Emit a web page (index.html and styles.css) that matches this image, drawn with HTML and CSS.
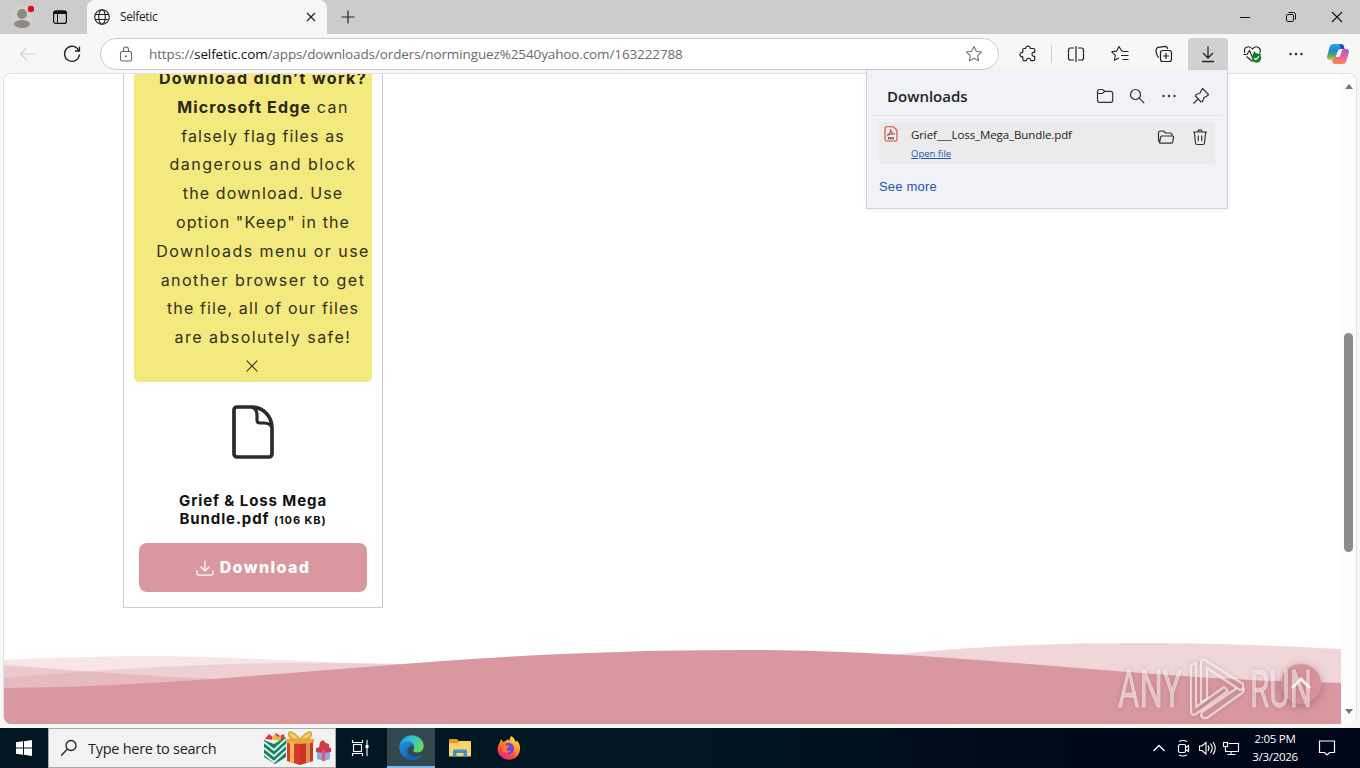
FILE: index.html
```html
<!DOCTYPE html>
<html lang="en">
<head>
    <meta charset="UTF-8">
    <meta name="viewport" content="width=device-width, initial-scale=1.0">
    <title>Selfetic</title>
    <link rel="stylesheet" href="styles.css">
</head>
<body>
    <div class="screen">
        <!-- tab strip -->
        <div class="tabbar">
            <div class="profile">
                <svg width="24" height="26" viewBox="0 0 24 26"><circle cx="12" cy="14" r="11" fill="#d3d0ce"/><circle cx="12" cy="11" r="5" fill="#8d8985"/><ellipse cx="12" cy="21" rx="8" ry="4" fill="#8d8985"/><circle cx="21" cy="6" r="3.2" fill="#d9101f"/></svg>
            </div>
            <svg class="workspace" width="16" height="16" viewBox="0 0 16 16"><rect x="1.6" y="2" width="12.8" height="12.4" rx="2" fill="none" stroke="#111" stroke-width="1.2"/><path d="M1.5 5V3.5a2 2 0 0 1 2-2h9a2 2 0 0 1 2 2V5z" fill="#111"/><path d="M5.5 5v9" stroke="#111"/></svg>
            <div class="tab">
                <svg width="16" height="16" viewBox="0 0 16 16" fill="none" stroke="#222" stroke-width="1.1"><circle cx="8" cy="8" r="7.3"/><ellipse cx="8" cy="8" rx="3.3" ry="7.3"/><path d="M1.2 5.5h13.6M1.2 10.5h13.6"/></svg>
                <span class="tab-title">Selfetic</span>
                <svg width="10" height="10" viewBox="0 0 10 10" stroke="#222" stroke-width="1.2"><path d="M1 1l8 8M9 1l-8 8"/></svg>
            </div>
            <svg class="newtab" width="14" height="14" viewBox="0 0 14 14" stroke="#222" stroke-width="1.2"><path d="M7 .5v13M.5 7h13"/></svg>
            <div class="window-buttons">
                <svg width="46" height="34" viewBox="0 0 46 34"><path d="M18 17.5h10" stroke="#111"/></svg>
                <svg width="46" height="34" viewBox="0 0 46 34" fill="none" stroke="#111"><rect x="18.5" y="14.5" width="7" height="7" rx="1.3"/><path d="M20.5 12.5h5a2 2 0 0 1 2 2v5"/></svg>
                <svg width="46" height="34" viewBox="0 0 46 34" fill="none" stroke="#111" stroke-width="1.1"><path d="M18 12l10 10M28 12l-10 10"/></svg>
            </div>
        </div>

        <!-- toolbar -->
        <div class="toolbar">
            <svg class="tool" viewBox="0 0 44 32" fill="none" stroke="#cfcfcf" stroke-width="1.1"><path d="M14.5 16h15M21 9.500l-6.500 6.500 6.500 6.500"/></svg>
            <svg class="tool" viewBox="0 0 44 32" fill="none" stroke="#222" stroke-width="1.3"><path d="M29 13a7.500 7.500 0 1 0 .5 3.500M29.500 8.500V13H25"/></svg>
            <div class="address">
                <svg width="14" height="16" viewBox="0 0 14 16" fill="none" stroke="#666" stroke-width="1.1"><rect x="1.500" y="5.500" width="11" height="9.500" rx="1.800"/><path d="M4.500 5.500V3.500a2.500 2.500 0 0 1 5 0v2"/><circle cx="7" cy="10.300" r=".5" fill="#666"/></svg>
                <span class="url">https://<b>selfetic.com</b>/apps/downloads/orders/norminguez%2540yahoo.com/163222788</span>
                <svg width="18" height="18" viewBox="0 0 18 18" fill="none" stroke="#777" stroke-width="1.100" stroke-linejoin="round"><path d="M9 1.500l2.300 4.800 5.200.7-3.800 3.600.9 5.200L9 13.300l-4.600 2.500.9-5.200L1.500 7l5.200-.7z"/></svg>
            </div>
            <!-- extensions -->
            <svg class="tool ext" viewBox="0 0 44 32" fill="none" stroke="#222" stroke-width="1.2" stroke-linejoin="round"><path d="M19 10.500h1.700c-.1-3.300 4.700-3.300 4.600 0H28.500q1.200 0 1.200 1.200v2.500c-3.600-.4-3.600 4.600 0 4.200v3q0 1.200-1.200 1.200h-2.700c.2-3-4.700-3-4.500 0H19q-1.200 0-1.200-1.200v-2.600c-3.800.3-3.800-4.800 0-4.500v-2.600q0-1.200 1.200-1.200z"/></svg>
            <span class="divider"></span>
            <svg class="tool split" viewBox="0 0 44 32" fill="none" stroke="#222" stroke-width="1.2"><path d="M20 10h-3.500a2 2 0 0 0-2 2v8a2 2 0 0 0 2 2H20M24 10h3.500a2 2 0 0 1 2 2v8a2 2 0 0 1-2 2H24M22 8v16"/></svg>
            <svg class="tool" viewBox="0 0 44 32" fill="none" stroke="#222" stroke-width="1.1" stroke-linejoin="round"><path d="M25 13l-1.500-.2L21 8.500l-2.300 4.600-5 .7 3.600 3.500-.9 5 4.500-2.300M24.500 13.500h6M23 17.500h7.500M24.500 21.500h6"/></svg>
            <svg class="tool" viewBox="0 0 44 32" fill="none" stroke="#222" stroke-width="1.2"><path d="M17 19.500c-2-.3-3.300-6-2.800-8.200.3-1.300 1-1.800 2-2l7-1c1.500 0 2.100.9 2.500 2.500"/><rect x="18.500" y="12.500" width="11" height="11" rx="2.300"/><path d="M24 15v6M21 18h6"/></svg>
            <svg class="tool active" viewBox="0 0 40 32" fill="none" stroke="#222" stroke-width="1.3"><path d="M20 8.500v11M15 15l5 5 5-5M14 23.500h12"/></svg>
            <svg class="tool heart" viewBox="0 0 44 32" fill="none" stroke="#222" stroke-width="1.1"><path d="M15 15c-2.500-5.500 4-8.500 7.500-4 3.500-4.500 10-1 7 4.500M16.500 18.500l6 5M13.500 16.500H17l2.500-4 3 7 2-5 1.200 2h5"/><circle cx="26.500" cy="20" r="4.700" fill="#13801a" stroke="none"/><path d="M24.200 20l1.700 1.700 3-3.300" stroke="#fff"/></svg>
            <svg class="tool" viewBox="0 0 44 32" fill="#222"><circle cx="16.500" cy="16" r="1.200"/><circle cx="22" cy="16" r="1.200"/><circle cx="27.500" cy="16" r="1.200"/></svg>
            <svg class="copilot" width="24" height="24" viewBox="0 0 24 24">
                <defs>
                    <linearGradient id="cp1" x1="0" y1="0" x2="0" y2="1"><stop offset="0" stop-color="#20a7e8"/><stop offset=".4" stop-color="#2b82d8"/><stop offset=".7" stop-color="#48ad72"/><stop offset="1" stop-color="#e8c42e"/></linearGradient>
                    <linearGradient id="cp2" x1="0" y1="0" x2="0" y2="1"><stop offset="0" stop-color="#a45ae4"/><stop offset=".5" stop-color="#e8609e"/><stop offset="1" stop-color="#fa8550"/></linearGradient>
                </defs>
                <path d="M8 2h7c2 0 2.500 1 3 3l.5 2h-4c-1.500 0-2.500 1-3 3l-1.500 5c-.5 2-1.500 3-3.500 3H4c-2.500 0-3.500-1.500-2.800-4L3.500 5.500C4.200 3 5.500 2 8 2z" fill="url(#cp1)"/>
                <path d="M16 22H9c-1.500 0-2.300-1-2.700-2.500L6 18c2 0 3-1 3.500-3h2c1.500 0 2.200-1 2.700-2.500l1.300-3C16 8 16.800 7 18.300 7H20c2.500 0 3.500 1.500 2.800 4l-2.300 7.500C19.800 21 18.500 22 16 22z" fill="url(#cp2)"/>
                <path d="M14 2h1c2 0 2.500 1 3 3l.5 2h-4z" fill="#1a51b8"/>
                <path d="M11.500 10L10 15h2.500c1.200 0 1.700-1 2.100-2.300l1-2.700z" fill="#f7f7f7"/>
            </svg>
        </div>

        <!-- page -->
        <div class="viewport">
            <div class="page">
                <div class="card">
                    <div class="notice">
                        <p class="notice-text"><b class="loose">Download didn’t work?</b><br><b>Microsoft Edge</b> <span class="loose">can</span><br>falsely flag files as<br><span class="loose">dangerous and block</span><br>the download. Use<br>option "Keep" in the<br><span class="loose">Downloads menu or use</span><br><span class="loose">another browser to get</span><br>the file, all of our files<br><span class="loose">are absolutely safe!</span></p>
                        <svg class="notice-close" width="12" height="12" viewBox="0 0 12 12" stroke="#332f18" stroke-width="1.1"><path d="M.7.7l10.600 10.600M11.300.7L.7 11.300"/></svg>
                    </div>
                    <svg class="file-icon" width="42" height="54" viewBox="0 0 42 54" fill="none" stroke="#2b2b2b" stroke-width="3.700" stroke-linejoin="round"><path d="M5 2h14c12 0 21 9 21 21v26a3 3 0 0 1-3 3H5a3 3 0 0 1-3-3V5a3 3 0 0 1 3-3z"/><path d="M19 2c4 1 6 4 6 8v5c0 2 1 3 3 3h4c4 0 7 1 8 5" stroke-width="3.200"/></svg>
                    <div class="file-name">Grief &amp; Loss Mega<br>Bundle.pdf <small>(106 KB)</small></div>
                    <div class="download-btn">
                        <svg width="18" height="16" viewBox="0 0 18 16" fill="none" stroke="#fff" stroke-width="1.200" stroke-linecap="round" stroke-linejoin="round"><path d="M9 .8v10M5 7l4 4 4-4M1 10.500v3c0 1 .6 1.700 1.700 1.700h12.600c1.100 0 1.700-.7 1.700-1.700v-3"/></svg>
                        <span>Download</span>
                    </div>
                </div>
                <svg class="waves" width="1337" height="84" viewBox="4 641 1337 84">
                    <path d="M4 660C60 657 110 656 160 656C250 657 320 663 400 664V725H4z" fill="#f7e6e8"/>
                    <path d="M4 665C60 669 110 674 217 679V725H4z" fill="#d9969e" fill-opacity=".36"/>
                    <path d="M4 678C60 673 100 670 180 666C250 662 330 663 400 664V725H4z" fill="#d9969e" fill-opacity=".28"/>
                    <path d="M880 656C970 646 1060 643 1140 643C1220 643 1280 646 1341 649V725H880z" fill="#f0d5d9"/>
                    <path d="M4 688C250 686 430 650 740 650C960 650 1120 679 1341 683V725H4z" fill="#d9979f"/>
                </svg>
                <svg class="to-top" width="44" height="44" viewBox="0 0 44 44"><circle cx="22" cy="22" r="20" fill="#d9929b"/><path d="M13 26l9-9 9 9" fill="none" stroke="#fff" stroke-width="3"/></svg>
                <svg class="watermark" width="204" height="68" viewBox="1115 655 204 68">
                    <g fill="#fff" fill-opacity=".5" stroke="#fff" stroke-opacity=".4" stroke-width=".8" font-family="Roboto, sans-serif" font-weight="400" font-size="52">
                        <text x="1118" y="707" textLength="64" lengthAdjust="spacingAndGlyphs">ANY</text>
                        <text x="1250" y="707" textLength="62" lengthAdjust="spacingAndGlyphs">RUN</text>
                    </g>
                    <g fill="none" stroke="#fff" stroke-opacity=".6" stroke-width="2.200" stroke-linejoin="round">
                        <path d="M1196 663l-4 2q-1 1-1 3v42q0 7 5 4l32-23-4-4-28 20v-44z"/>
                        <path d="M1201 702v-39q0-5 4-3l38 24v5l-3 1-33-22v31z"/>
                        <path d="M1243 688q2 3-1 5l-35 25q-5 1-6-3l1-3 35-24"/>
                    </g>
                </svg>
            </div>
            <div class="scrollbar">
                <span class="arrow up"></span>
                <span class="thumb"></span>
                <span class="arrow down"></span>
            </div>
        </div>

        <!-- downloads flyout -->
        <div class="flyout">
            <div class="flyout-head">
                <h2>Downloads</h2>
                <svg width="18" height="18" viewBox="0 0 18 18" fill="none" stroke="#333" stroke-width="1.200"><path d="M1.500 4.500a2 2 0 0 1 2-2h3.200l2 1.800h6a2 2 0 0 1 2 2v7a2 2 0 0 1-2 2H3.500a2 2 0 0 1-2-2zM1.500 6.500h5l2.200-2.200"/></svg>
                <svg width="18" height="18" viewBox="0 0 18 18" fill="none" stroke="#333" stroke-width="1.200"><circle cx="7.500" cy="7.500" r="5"/><path d="M11.200 11.200l5 5"/></svg>
                <svg width="18" height="18" viewBox="0 0 18 18" fill="#333"><circle cx="3.500" cy="9" r="1.200"/><circle cx="9" cy="9" r="1.200"/><circle cx="14.500" cy="9" r="1.200"/></svg>
                <svg width="18" height="18" viewBox="0 0 18 18" fill="none" stroke="#333" stroke-width="1.200" stroke-linejoin="round"><path d="M10.500 1.500l6 6-1.500 1.500-3 1.500-1.500 4-1.500.5L3.500 9 4 7.500l4-1.500 1.500-3zM6 12l-4.500 4.500"/></svg>
            </div>
            <div class="flyout-item">
                <svg width="14" height="16" viewBox="0 0 14 16" fill="none" stroke="#d5494b" stroke-width="1.100"><path d="M3 .8h6.500L13 4.300V13.500a1.500 1.500 0 0 1-1.500 1.500h-9A1.500 1.500 0 0 1 1 13.500V2.300A1.500 1.500 0 0 1 2.500.8zM3 9.500c2.500-1.500 4-4 3.700-6.500 0 3 1.300 5 4.300 5-2.500-.6-5 0-8 1.500"/><path d="M4 12.200h6" stroke="#444" stroke-width="2" stroke-dasharray="1.500 .6"/></svg>
                <div class="item-text">
                    <div class="item-name">Grief___Loss_Mega_Bundle.pdf</div>
                    <span class="open-link">Open file</span>
                </div>
                <svg width="18" height="18" viewBox="0 0 18 18" fill="none" stroke="#333" stroke-width="1.200" stroke-linejoin="round"><path d="M2.500 14.500L1.500 12V5a2 2 0 0 1 2-2h3l2 2h5a1.500 1.500 0 0 1 1.500 1.500V8M2.500 14.500L3.700 9Q4 8 5 8h10.500q1.300 0 1 1.200l-.7 4.600q-.4 1.400-1.800 1.400H3.500q-1 0-1-.7z"/></svg>
                <svg width="18" height="18" viewBox="0 0 18 18" fill="none" stroke="#333" stroke-width="1.200"><path d="M2 4h14M6.800 4a2.200 2.200 0 0 1 4.400 0M3.300 4l1.200 11q.2 1.500 1.700 1.500h5.600q1.500 0 1.700-1.500l1.200-11M7.300 7.500v5.500M10.700 7.500v5.500"/></svg>
            </div>
            <div class="see-more">See more</div>
        </div>

        <!-- taskbar -->
        <div class="taskbar">
            <div class="start">
                <svg width="16" height="16" viewBox="0 0 16 16" fill="#fff"><path d="M0 2.300l7-1v6.200H0zM8 1.200L16 0v7.500H8zM0 8.500h7v6.200l-7-1zM8 8.500h8V16l-8-1.200z"/></svg>
            </div>
            <div class="search">
                <svg width="18" height="18" viewBox="0 0 18 18" fill="none" stroke="#222" stroke-width="1.300"><circle cx="10" cy="6.500" r="5"/><path d="M6.300 10.200L0 16.700"/></svg>
                <span>Type here to search</span>
                <svg class="gifts" width="70" height="36" viewBox="0 0 70 36">
                    <path d="M3 9l4-5 4 3 3-4 4 3 4-2 1 7z" fill="#d63a38"/>
                    <path d="M10 7l3-3 3 3 3-2v5h-9z" fill="#e9b64a"/>
                    <path d="M2 10l10 4 12-7v20l-11 7-11-7z" fill="#138267"/>
                    <path d="M2 12l10 8 12-11M2 18l10 8 12-11M2 24l10 8 12-11" fill="none" stroke="#e5f3ed" stroke-width="1.800"/>
                    <path d="M25 11l13 2 13-2v20l-13 4-13-4z" fill="#d43a2e"/>
                    <path d="M24 9l14-1 14 1v4l-14 1-14-1z" fill="#e9a63e"/>
                    <path d="M28 12v20l4 1V12zM44 12v21l4-1V12z" fill="#efb84e"/>
                    <path d="M38 14v21l13-4V12z" fill="#a92924" opacity=".25"/>
                    <path d="M38 10C35 5 28 0 27 3c-1 3 2 7 11 7 9 0 12-4 11-7-1-3-8 2-11 7" fill="#f6d27b" stroke="#dfa83c" stroke-width="2"/>
                    <path d="M55 20l7-1 6 1v9l-6 2-7-2z" fill="#8fa6de"/>
                    <path d="M54 18l8-2 7 2v4l-7 1-8-1z" fill="#cb3a50"/>
                    <path d="M60 20h3v11h-3z" fill="#d95a79"/><path d="M57 17l1-5 3-2 3 3 3 1v4z" fill="#d73c49"/>
                </svg>
            </div>
            <div class="task">
                <svg width="18" height="18" viewBox="0 0 18 18" fill="none" stroke="#fff" stroke-width="1.100"><path d="M1.500 1v2.500h10V1M1.500 17v-2.500h10V17M16 1v16"/><rect x="2.500" y="5.500" width="8" height="7"/><rect x="14.500" y="6" width="3" height="3" fill="#fff" stroke="none"/></svg>
            </div>
            <div class="task open">
                <svg width="25" height="25" viewBox="0 0 24 24">
                    <defs>
                        <linearGradient id="ed1" x1="0" y1="0" x2="1" y2=".4"><stop offset="0" stop-color="#1b8bd8"/><stop offset=".5" stop-color="#2cc1dc"/><stop offset="1" stop-color="#65d75c"/></linearGradient>
                        <linearGradient id="ed2" x1="0" y1="0" x2="1" y2="1"><stop offset="0" stop-color="#2196e0"/><stop offset="1" stop-color="#114a9b"/></linearGradient>
                    </defs>
                    <path d="M.4 10.500C1.500 4.500 6 .3 12 .3c7 0 11.700 5 11.700 10.200 0 3.700-2.600 6.200-6 6.200-3 0-4.400-1.200-4.100-1.900.2-.6 1-.9 1-2.500 0-2.600-2.900-5-6.300-5C4.500 7.300 1.500 9 .4 10.500z" fill="url(#ed1)"/>
                    <path d="M.4 10.500C1.500 8.500 4.500 6 8.300 6.200c3.500 0 6.300 2 6.300 5-1-1.800-6.300-1.500-6.300 4 0 5 5.700 7.500 12.700 4.800-2 2.500-5 3.900-8.500 3.900C5.500 23.900-.5 18 .4 10.500z" fill="url(#ed2)"/>
                    <path d="M8.300 14c-.3 5.500 5.500 9 12.900 5.700.5-.3.900.1.500.6-2 2.400-5.200 3.700-9 3.600C7.500 22 6 16.500 8.300 14z" fill="#1261b7"/>
                </svg>
            </div>
            <div class="task">
                <svg width="22" height="20" viewBox="0 0 22 20"><path d="M0 2q0-1 1-1h7l2 2h11v5H0z" fill="#e59a1c"/><path d="M0 5h9l2-2h10q1 0 1 1v14.500H0z" fill="#fbd267"/><path d="M4 19v-6q0-1.500 1.500-1.500h11Q18 11.500 18 13v6h-3.500v-4h-7v4z" fill="#3a92cf"/></svg>
            </div>
            <div class="task">
                <svg width="24" height="24" viewBox="0 0 24 24">
                    <defs><linearGradient id="ff" x1=".8" y1="0" x2=".2" y2="1"><stop offset="0" stop-color="#fff044"/><stop offset=".4" stop-color="#ff9626"/><stop offset=".75" stop-color="#ff3850"/><stop offset="1" stop-color="#e8209a"/></linearGradient></defs>
                    <path d="M2.500 7L4 3l2 3 2.500-1L11 3l1 2 2-5c3 1.500 4 4 4.500 6L20 4.500c2.500 3 3.500 6 3 9.500-.8 6-5.500 9.800-11 9.800S.5 19 .5 13.500c0-2.500.7-4.500 2-6.500z" fill="url(#ff)"/>
                    <path d="M8.500 7.500c4-2 8.500.5 8.500 5.200 0 3.300-2.500 5.300-5.300 5.300S7 16.500 6.500 14z" fill="#6e46d8"/><path d="M4 8c2-1.500 4.500-.5 5 1l3 1c0 1.500-2 1.500-2.500 3-.3 1.500 1.500 2.500 4 1.500-1.500 3.500-7.500 3.500-8.500-1z" fill="#ff7a22"/>
                </svg>
            </div>
            <div class="tray">
                <svg width="24" height="24" viewBox="0 0 24 24" fill="none" stroke="#fff" stroke-width="1.300"><path d="M6.500 15l5.500-5.500 5.500 5.500"/></svg>
                <svg width="24" height="24" viewBox="0 0 24 24" fill="none" stroke="#fff" stroke-width="1.200"><rect x="7.500" y="8.500" width="7" height="8" rx="1.500"/><path d="M14.500 11.500l3-2v6l-3-2M8 5.500q4-2 8 0M8 19q4 2 8 0"/></svg>
                <svg width="24" height="24" viewBox="0 0 24 24" fill="none" stroke="#fff" stroke-width="1.100"><path d="M4.500 10v4.500h2.500l4 3.500V6.500L7 10zM13 9.500q2 2.700 0 5.500M15.500 7.500q3.500 4.700 0 9.500M18 6q4.500 6 0 12.500"/></svg>
                <svg width="24" height="24" viewBox="0 0 24 24" fill="none" stroke="#fff" stroke-width="1.100"><path d="M9.500 7.500h10v8h-13V12M12 15.500v3M8.500 18.500h8"/><rect x="4.500" y="6.500" width="4" height="4"/><path d="M6.500 10.500v5"/></svg>
                <div class="clock"><span>2:05 PM</span><span>3/3/2026</span></div>
                <svg class="bell" width="18" height="18" viewBox="0 0 18 18" fill="none" stroke="#fff" stroke-width="1.200"><path d="M1.500 2h15v11.500h-5L9 16l-2.500-2.500h-5z"/></svg>
            </div>
        </div>
    </div>
</body>
</html>
```
FILE: styles.css
```css
* {
    box-sizing: border-box;
}

body {
    margin: 0;
    font-family: "Open Sans", "Noto Sans", sans-serif;
    color: #222;
    overflow: hidden;
}

svg {
    display: block;
    flex: none;
}

.screen {
    position: relative;
    display: flex;
    flex-direction: column;
    width: 1360px;
    height: 768px;
    background-color: #f7f7f7;
}

/* tabs */
.tabbar {
    display: flex;
    align-items: center;
    height: 34px;
    background-color: #ccc;
}

.profile {
    width: 52px;
    padding: 0 0 2px 10px;
}

.workspace {
    margin-right: 19px;
}

.tab {
    display: flex;
    align-items: center;
    width: 240px;
    height: 34px;
    padding: 0 11px 0 7px;
    background-color: #f7f7f7;
    border-radius: 8px 8px 0 0;
}

.tab-title {
    flex: 1;
    margin: -2px 0 0 10px;
    font-size: 12px;
    letter-spacing: -0.35px;
}

.newtab {
    margin-left: 14px;
}

.window-buttons {
    display: flex;
    margin-left: auto;
}

/* toolbar */
.toolbar {
    display: flex;
    align-items: center;
    height: 39px;
    padding: 0 10px 0 6px;
}

.tool {
    width: 44px;
    height: 32px;
}

.address {
    display: flex;
    align-items: center;
    width: 899px;
    height: 32px;
    margin-left: 6px;
    padding: 0 15px 0 18px;
    background-color: #fff;
    border: 1px solid #ccc;
    border-radius: 16px;
}

.url {
    flex: 1;
    margin-left: 16px;
    font-size: 13.5px;
    letter-spacing: -0.12px;
    color: #6b6b6b;
    white-space: nowrap;
}

.url b {
    font-weight: normal;
    color: #111;
}

.ext {
    margin-left: 6px;
}

.divider {
    width: 1px;
    height: 18px;
    margin-left: 2px;
    background-color: #ccc;
}

.split {
    margin-left: 2px;
}

.active {
    width: 40px;
    margin-left: 2px;
    background-color: #d1d1d1;
    border-radius: 4px 4px 0 0;
}

.heart {
    margin-left: 2px;
}

.copilot {
    margin-left: 8px;
}

/* page area */
.viewport {
    display: flex;
    height: 651px;
    width: 1354px;
    margin-left: 3px;
    background-color: #fff;
    border: 1px solid #e2e2e2;
    border-bottom: 0;
    border-radius: 8px;
    overflow: hidden;
}

.page {
    position: relative;
    width: 1337px;
    height: 651px;
    overflow: hidden;
}

.card {
    display: flex;
    flex-direction: column;
    align-items: center;
    width: 260px;
    height: 534px;
    margin-left: 119px;
    padding: 0 10px;
    border: 1px solid #ccc;
    border-top: 0;
    font-family: Inter, sans-serif;
}

.notice {
    width: 238px;
    height: 308px;
    background-color: #f4e97f;
    border-radius: 0 0 5px 5px;
    color: #332f18;
}

.notice-text {
    width: 218px;
    margin: -10px 0 0 20px;
    font-size: 16px;
    line-height: 28.8px;
    letter-spacing: 1.12px;
    text-align: center;
    white-space: nowrap;
}

.notice-text b {
    color: #2a2613;
}

.loose {
    letter-spacing: 1.47px;
}

b.loose {
    letter-spacing: 1.38px;
}

.notice-close {
    margin: 8px auto 0 112px;
}

.file-icon {
    margin-top: 23px;
}

.file-name {
    width: 150px;
    margin-top: 33px;
    font-size: 15px;
    font-weight: 700;
    line-height: 18px;
    letter-spacing: 0.9px;
    color: #111;
    text-align: center;
    white-space: nowrap;
}

.file-name small {
    font-size: 11px;
}

.download-btn {
    display: flex;
    align-items: center;
    justify-content: center;
    gap: 6px;
    width: 228px;
    height: 49px;
    margin-top: 14px;
    background-color: #d9979f;
    border-radius: 8px;
    color: #fff;
    font-size: 16px;
    font-weight: 800;
    letter-spacing: 1.4px;
}

.download-btn span {
    margin-top: -2px;
}

.waves {
    position: absolute;
    left: 0;
    bottom: 0;
}

.to-top {
    position: absolute;
    left: 1275px;
    top: 588px;
    filter: drop-shadow(0 2px 4px rgba(90, 40, 45, 0.35));
}

.watermark {
    position: absolute;
    left: 1111px;
    top: 581px;
    filter: drop-shadow(0 0 2px rgba(70, 40, 45, 0.35));
}

.scrollbar {
    display: flex;
    flex-direction: column;
    align-items: center;
    width: 15px;
    padding-top: 10px;
    background-color: #fcfcfc;
}

.arrow {
    border: 4.5px solid transparent;
}

.up {
    border-top: 0;
    border-bottom: 5px solid #777;
}

.down {
    border-bottom: 0;
    border-top: 5px solid #777;
}

.thumb {
    width: 9px;
    height: 219px;
    margin: 244px 0 157px;
    background-color: #8b8b8b;
    border-radius: 5px;
}

/* downloads flyout */
.flyout {
    position: absolute;
    left: 866px;
    top: 70px;
    width: 362px;
    height: 139px;
    background-color: #f1f2f7;
    border: 1px solid #d2d3d8;
    border-top: 0;
    box-shadow: 0 1px 4px rgba(0, 0, 0, 0.08);
}

.flyout-head {
    display: flex;
    align-items: center;
    gap: 14px;
    height: 46px;
    margin: 0 5px;
    padding: 6px 12px 0 15px;
    border-bottom: 1px solid #e2e3e7;
}

.flyout-head h2 {
    flex: 1;
    margin: 0;
    font-size: 15px;
    font-weight: 600;
}

.flyout-item {
    display: flex;
    align-items: flex-start;
    width: 336px;
    height: 42px;
    margin: 6px 0 0 12px;
    padding: 4px 6px 0 5px;
    background-color: #ebebeb;
}

.flyout-item > svg + svg,
.item-text + svg {
    margin-top: 2px;
}

.item-text + svg {
    margin-right: 16px;
}

.item-text {
    flex: 1;
    margin-left: 13px;
    line-height: 18px;
}

.item-name {
    font-size: 11.5px;
    letter-spacing: -0.1px;
}

.open-link {
    display: block;
    margin-top: 1px;
    font-size: 9.5px;
    color: #2457b8;
    text-decoration: underline;
}

.see-more {
    margin: 15px 0 0 12px;
    font-family: "Liberation Sans", Arial, sans-serif;
    font-size: 13px;
    letter-spacing: 0.2px;
    color: #2457b0;
}

/* taskbar */
.taskbar {
    display: flex;
    height: 40px;
    margin-top: 4px;
    background: linear-gradient(90deg, #001722, #001722 50%, #000818 80%, #000617);
}

.start,
.task {
    display: flex;
    align-items: center;
    justify-content: center;
    width: 48px;
}

.search {
    display: flex;
    align-items: center;
    width: 288px;
    padding: 0 3px 0 12px;
    background-color: #f2f2f2;
    border: 1px solid #aaa;
}

.search span {
    flex: 1;
    margin-left: 9px;
    font-size: 14.5px;
    letter-spacing: -0.27px;
    white-space: nowrap;
}

.task {
    width: 49px;
}

.task:nth-child(3) {
    width: 51px;
    padding-right: 3px;
}

.open {
    width: 48px;
    background-color: #33484f;
    border-bottom: 2px solid #76b9ed;
}

.tray {
    display: flex;
    align-items: center;
    margin-left: auto;
    padding-right: 24px;
    color: #fff;
}

.clock {
    display: flex;
    flex-direction: column;
    align-items: center;
    width: 64px;
    font-size: 11.5px;
    line-height: 18px;
    letter-spacing: -0.3px;
}

.bell {
    margin-left: 11px;
}
```
